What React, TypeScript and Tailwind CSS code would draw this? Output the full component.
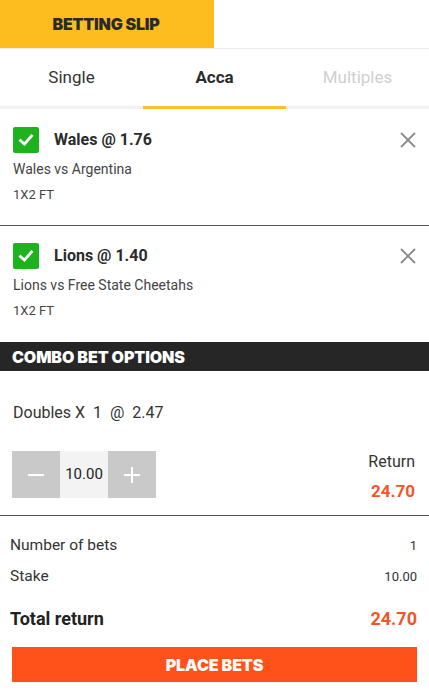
import React from "react";

const body = { fontFamily: '"Roboto", "Noto Sans", sans-serif' };
const heavy = { fontFamily: '"Inter", "Noto Sans", sans-serif' };

function Check() {
  return (
    <div className="w-[26px] h-[26px] bg-[#1fb21f] rounded-[2px] flex items-center justify-center shrink-0">
      <svg width="18" height="18" viewBox="0 0 18 18">
        <path d="M3.5 9.5 L7.5 13 L14.5 5" fill="none" stroke="white" strokeWidth="2.8" strokeLinecap="square" />
      </svg>
    </div>
  );
}

function Close() {
  return (
    <svg width="18" height="18" viewBox="0 0 18 18" className="shrink-0">
      <path d="M2 2 L16 16 M16 2 L2 16" stroke="#8a8a8a" strokeWidth="1.8" />
    </svg>
  );
}

function Bet({ title, match, last }: { title: string; match: string; last?: boolean }) {
  return (
    <div className={last ? "px-[13px] pt-[17px] pb-[21px]" : "px-[13px] pt-[18px] pb-[20px] border-b border-[#555]"}>
      <div className="flex items-center h-[26px]">
        <Check />
        <div className="ml-[15px] text-[16px] font-bold text-[#2b2b2b] flex-1">{title}</div>
        <div className="mr-[-1px]"><Close /></div>
      </div>
      <div className="text-[14px] text-[#444] mt-[6px] leading-[20px]">{match}</div>
      <div className="text-[13px] text-[#444] mt-[6px] leading-[20px]">1X2 FT</div>
    </div>
  );
}

export default function App() {
  return (
    <div className="w-[429px] h-[696px] bg-white overflow-hidden" style={body}>
      <div className="flex h-[49px] border-b border-[#ececec]">
        <div className="w-[214px] bg-[#fdbd1f] flex items-center justify-center">
          <span className="text-[16px] font-black text-[#2a2a2a] tracking-[-0.2px] mr-[2px]" style={heavy}>BETTING SLIP</span>
        </div>
      </div>
      <div className="flex h-[60px] border-b-[3px] border-[#f2f2f2]">
        <div className="flex-1 flex items-center justify-center text-[17px] text-[#333]">Single</div>
        <div className="flex-1 flex items-center justify-center text-[17px] font-bold text-[#2b2b2b] relative">
          Acca
          <div className="absolute left-0 right-0 bottom-[-3px] h-[3px] bg-[#fbbf2a]" />
        </div>
        <div className="flex-1 flex items-center justify-center text-[17px] text-[#cfcfcf]">Multiples</div>
      </div>
      <Bet title="Wales @ 1.76" match="Wales vs Argentina" />
      <Bet title="Lions @ 1.40" match="Lions vs Free State Cheetahs" last />
      <div className="h-[29px] bg-[#262626] flex items-center px-[12px]">
        <span className="text-white text-[16px] font-black tracking-[-0.1px]" style={heavy}>COMBO BET OPTIONS</span>
      </div>
      <div className="px-[13px] pt-[30px] text-[16px] text-[#333] leading-[24px]">Doubles&nbsp;X&nbsp;&nbsp;1&nbsp;&nbsp;@&nbsp;&nbsp;2.47</div>
      <div className="flex justify-between pl-[12px] pr-[14px] mt-[26px] pb-[17px] border-b border-[#555]">
        <div className="flex h-[47px]">
          <div className="w-[48px] bg-[#c9c9c9] flex items-center justify-center">
            <div className="w-[16px] h-[2px] bg-white" />
          </div>
          <div className="w-[48px] bg-[#f3f3f3] flex items-center justify-center text-[15px] text-[#222]">10.00</div>
          <div className="w-[48px] bg-[#c9c9c9] flex items-center justify-center relative">
            <div className="w-[16px] h-[2px] bg-white" />
            <div className="absolute w-[2px] h-[16px] bg-white" />
          </div>
        </div>
        <div className="flex flex-col items-end h-[47px]">
          <div className="text-[16px] text-[#333] leading-[22px]">Return</div>
          <div className="text-[17px] font-bold text-[#f0562a] leading-[22px] mt-[7px]">24.70</div>
        </div>
      </div>
      <div className="px-[10px] pt-[19px] pr-[12px]">
        <div className="flex justify-between items-center h-[22px]">
          <span className="text-[15.5px] text-[#333]">Number of bets</span>
          <span className="text-[13px] text-[#333]">1</span>
        </div>
        <div className="flex justify-between items-center h-[22px] mt-[9px]">
          <span className="text-[15.5px] text-[#333]">Stake</span>
          <span className="text-[13px] text-[#333]">10.00</span>
        </div>
        <div className="flex justify-between items-center h-[24px] mt-[18px]">
          <span className="text-[18px] font-bold text-[#222]">Total return</span>
          <span className="text-[18px] font-bold text-[#f0562a]">24.70</span>
        </div>
      </div>
      <div className="px-[12px] mt-[17px]">
        <div className="h-[35px] bg-[#ff521b] flex items-center justify-center">
          <span className="text-white text-[16px] font-black tracking-[-0.1px]" style={heavy}>PLACE BETS</span>
        </div>
      </div>
    </div>
  );
}
